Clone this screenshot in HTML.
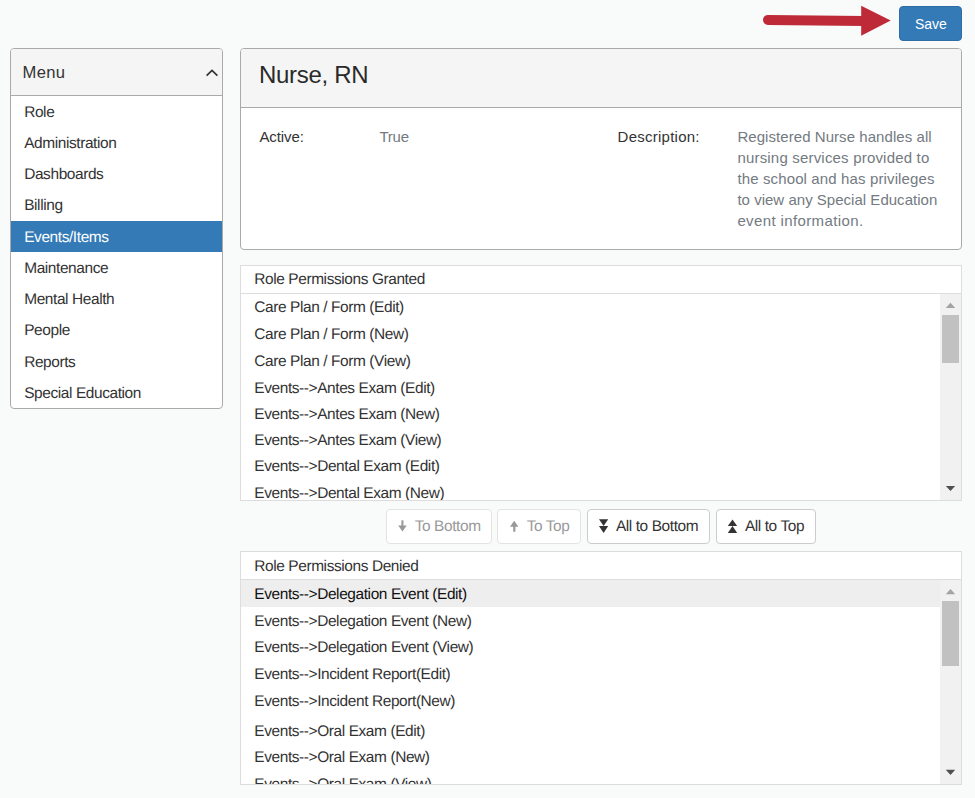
<!DOCTYPE html>
<html><head><meta charset="utf-8"><title>Role</title>
<style>
html,body{margin:0;padding:0}
body{width:975px;height:798px;overflow:hidden;position:relative;background:#f9fbfa;font-family:"Liberation Sans",sans-serif}
.t{position:absolute;white-space:nowrap;line-height:20px;font-family:"Liberation Sans",sans-serif}
</style></head><body>
<svg style="position:absolute;left:0;top:0" width="975" height="48" viewBox="0 0 975 48">
<line x1="768" y1="19.9" x2="864" y2="21" stroke="#be2a38" stroke-width="10" stroke-linecap="round"/>
<polygon points="861.2,5.8 890.7,20.5 861.2,35.7" fill="#be2a38"/>
</svg>
<div style="position:absolute;left:899px;top:6px;width:63px;height:35px;box-sizing:border-box;background:#337ab7;border:1px solid #2e6da4;border-radius:4px;"></div>
<div class="t " style="left:914.80px;top:13.80px;font-size:15.3px;color:#fff;letter-spacing:0px;transform:scaleX(0.915);transform-origin:0 0;">Save</div>
<div style="position:absolute;left:10px;top:48px;width:213px;height:361px;box-sizing:border-box;background:#fff;border:1px solid #aaaaaa;border-radius:4px;overflow:hidden;"><div style="height:46px;background:#f5f5f5;border-bottom:1px solid #aaaaaa"></div><div style="position:absolute;left:0;top:172px;width:211px;height:31px;background:#337ab7"></div></div>
<div class="t " style="left:22.60px;top:63.15px;font-size:16.6px;color:#333;letter-spacing:0.33px;">Menu</div>
<svg style="position:absolute;left:204px;top:67px" width="16" height="12" viewBox="0 0 16 12"><polyline points="2.6,8.6 8,3.4 13.4,8.6" fill="none" stroke="#333" stroke-width="1.7"/></svg>
<div class="t " style="left:24.20px;top:102.60px;font-size:15.45px;color:#333;letter-spacing:-0.4px;text-rendering:geometricPrecision;">Role</div>
<div class="t " style="left:24.20px;top:134.00px;font-size:15.45px;color:#333;letter-spacing:-0.4px;text-rendering:geometricPrecision;">Administration</div>
<div class="t " style="left:24.20px;top:165.20px;font-size:15.45px;color:#333;letter-spacing:-0.4px;text-rendering:geometricPrecision;">Dashboards</div>
<div class="t " style="left:24.20px;top:195.80px;font-size:15.45px;color:#333;letter-spacing:-0.4px;text-rendering:geometricPrecision;">Billing</div>
<div class="t " style="left:24.20px;top:227.80px;font-size:15.45px;color:#fff;letter-spacing:-0.4px;text-rendering:geometricPrecision;">Events/Items</div>
<div class="t " style="left:24.20px;top:258.80px;font-size:15.45px;color:#333;letter-spacing:-0.4px;text-rendering:geometricPrecision;">Maintenance</div>
<div class="t " style="left:24.20px;top:289.70px;font-size:15.45px;color:#333;letter-spacing:-0.4px;text-rendering:geometricPrecision;">Mental Health</div>
<div class="t " style="left:24.20px;top:320.60px;font-size:15.45px;color:#333;letter-spacing:-0.4px;text-rendering:geometricPrecision;">People</div>
<div class="t " style="left:24.20px;top:352.90px;font-size:15.45px;color:#333;letter-spacing:-0.4px;text-rendering:geometricPrecision;">Reports</div>
<div class="t " style="left:24.20px;top:383.80px;font-size:15.45px;color:#333;letter-spacing:-0.4px;text-rendering:geometricPrecision;">Special Education</div>
<div style="position:absolute;left:240px;top:48px;width:722px;height:202px;box-sizing:border-box;background:#fff;border:1px solid #aaaaaa;border-radius:4px;overflow:hidden;"><div style="height:58px;background:#f5f5f5;border-bottom:1px solid #aaaaaa"></div></div>
<div class="t " style="left:259.00px;top:64.88px;font-size:24px;color:#2a2a2a;letter-spacing:-0.3px;">Nurse, RN</div>
<div class="t " style="left:259.40px;top:126.60px;font-size:15px;color:#333;letter-spacing:-0.1px;">Active:</div>
<div class="t " style="left:379.40px;top:126.60px;font-size:15px;color:#737a81;letter-spacing:-0.2px;">True</div>
<div class="t " style="left:617.60px;top:126.60px;font-size:15px;color:#333;letter-spacing:0.25px;">Description:</div>
<div class="t " style="left:737.40px;top:126.60px;font-size:15px;color:#737a81;letter-spacing:0.06px;">Registered Nurse handles all</div>
<div class="t " style="left:737.40px;top:147.60px;font-size:15px;color:#737a81;letter-spacing:0.19px;">nursing services provided to</div>
<div class="t " style="left:737.40px;top:169.00px;font-size:15px;color:#737a81;letter-spacing:0.13px;">the school and has privileges</div>
<div class="t " style="left:737.40px;top:190.00px;font-size:15px;color:#737a81;letter-spacing:0.02px;">to view any Special Education</div>
<div class="t " style="left:737.40px;top:211.00px;font-size:15px;color:#737a81;letter-spacing:0.38px;">event information.</div>
<div style="position:absolute;left:240px;top:265px;width:722px;height:236px;box-sizing:border-box;background:#fff;border:1px solid #dddddd;"><div style="height:27px;border-bottom:1px solid #dddddd"></div></div>
<div class="t " style="left:254.30px;top:269.60px;font-size:15.45px;color:#333;letter-spacing:-0.4px;text-rendering:geometricPrecision;">Role Permissions Granted</div>
<div style="position:absolute;left:241px;top:294px;width:699px;height:206px;overflow:hidden">
<div class="t " style="left:13.30px;top:3.70px;font-size:15.45px;color:#333;letter-spacing:-0.4px;text-rendering:geometricPrecision;">Care Plan / Form (Edit)</div>
<div class="t " style="left:13.30px;top:30.80px;font-size:15.45px;color:#333;letter-spacing:-0.4px;text-rendering:geometricPrecision;">Care Plan / Form (New)</div>
<div class="t " style="left:13.30px;top:58.00px;font-size:15.45px;color:#333;letter-spacing:-0.4px;text-rendering:geometricPrecision;">Care Plan / Form (View)</div>
<div class="t " style="left:13.30px;top:85.00px;font-size:15.45px;color:#333;letter-spacing:-0.4px;text-rendering:geometricPrecision;">Events--&gt;Antes Exam (Edit)</div>
<div class="t " style="left:13.30px;top:110.70px;font-size:15.45px;color:#333;letter-spacing:-0.4px;text-rendering:geometricPrecision;">Events--&gt;Antes Exam (New)</div>
<div class="t " style="left:13.30px;top:137.30px;font-size:15.45px;color:#333;letter-spacing:-0.4px;text-rendering:geometricPrecision;">Events--&gt;Antes Exam (View)</div>
<div class="t " style="left:13.30px;top:162.60px;font-size:15.45px;color:#333;letter-spacing:-0.4px;text-rendering:geometricPrecision;">Events--&gt;Dental Exam (Edit)</div>
<div class="t " style="left:13.30px;top:189.80px;font-size:15.45px;color:#333;letter-spacing:-0.4px;text-rendering:geometricPrecision;">Events--&gt;Dental Exam (New)</div>
</div>
<div style="position:absolute;left:940px;top:294px;width:21px;height:206px;background:#f1f1f1"></div><div style="position:absolute;left:942px;top:315px;width:17px;height:48px;background:#c1c1c1"></div><svg style="position:absolute;left:940px;top:294px" width="21" height="206" viewBox="0 0 21 206"><polygon points="5.8,14.100000000000012 10.5,8.800000000000011 15.2,14.100000000000012" fill="#a3a3a3"/><polygon points="5.8,191.89999999999998 15.2,191.89999999999998 10.5,197.09999999999997" fill="#505050"/></svg>
<div style="position:absolute;left:386px;top:509px;width:106px;height:35px;box-sizing:border-box;background:#fff;border:1px solid #e3e3e3;border-radius:4px;"></div>
<div style="position:absolute;left:497px;top:509px;width:84px;height:35px;box-sizing:border-box;background:#fff;border:1px solid #e3e3e3;border-radius:4px;"></div>
<div style="position:absolute;left:587px;top:509px;width:123px;height:35px;box-sizing:border-box;background:#fff;border:1px solid #ccc;border-radius:4px;"></div>
<div style="position:absolute;left:716px;top:509px;width:100px;height:35px;box-sizing:border-box;background:#fff;border:1px solid #ccc;border-radius:4px;"></div>
<div class="t " style="left:414.70px;top:516.80px;font-size:15.45px;color:#999;letter-spacing:-0.4px;text-rendering:geometricPrecision;">To Bottom</div>
<div class="t " style="left:526.70px;top:516.80px;font-size:15.45px;color:#999;letter-spacing:-0.4px;text-rendering:geometricPrecision;">To Top</div>
<div class="t " style="left:615.90px;top:516.80px;font-size:15.45px;color:#333;letter-spacing:-0.4px;text-rendering:geometricPrecision;">All to Bottom</div>
<div class="t " style="left:744.90px;top:516.80px;font-size:15.45px;color:#333;letter-spacing:-0.4px;text-rendering:geometricPrecision;">All to Top</div>
<svg style="position:absolute;left:380px;top:505px" width="450" height="44" viewBox="380 505 450 44">
<g fill="#999">
<rect x="401.4" y="520.3" width="2" height="6"/><polygon points="398.2,525.4 406.7,525.4 402.45,531.4"/>
<rect x="513.2" y="526" width="2.2" height="5.7"/><polygon points="510,526.7 518.4,526.7 514.2,520.7"/>
</g>
<g fill="#333">
<polygon points="599,519.2 608.2,519.2 603.6,526"/><polygon points="599,526 608.2,526 603.6,533"/>
<polygon points="727.8,526 737.2,526 732.5,519.4"/><polygon points="727.8,532.9 737.2,532.9 732.5,526"/>
</g></svg>
<div style="position:absolute;left:240px;top:551px;width:722px;height:234px;box-sizing:border-box;background:#fff;border:1px solid #dddddd;"><div style="height:27px;border-bottom:1px solid #dddddd"></div></div>
<div class="t " style="left:254.30px;top:557.10px;font-size:15.45px;color:#333;letter-spacing:-0.4px;text-rendering:geometricPrecision;">Role Permissions Denied</div>
<div style="position:absolute;left:241px;top:580px;width:699px;height:204px;overflow:hidden">
<div style="position:absolute;left:0;top:0;width:699px;height:27px;background:#eeeeee"></div>
<div class="t " style="left:13.30px;top:5.10px;font-size:15.45px;color:#111;letter-spacing:-0.4px;text-rendering:geometricPrecision;">Events--&gt;Delegation Event (Edit)</div>
<div class="t " style="left:13.30px;top:31.70px;font-size:15.45px;color:#333;letter-spacing:-0.4px;text-rendering:geometricPrecision;">Events--&gt;Delegation Event (New)</div>
<div class="t " style="left:13.30px;top:57.90px;font-size:15.45px;color:#333;letter-spacing:-0.4px;text-rendering:geometricPrecision;">Events--&gt;Delegation Event (View)</div>
<div class="t " style="left:13.30px;top:84.60px;font-size:15.45px;color:#333;letter-spacing:-0.4px;text-rendering:geometricPrecision;">Events--&gt;Incident Report(Edit)</div>
<div class="t " style="left:13.30px;top:111.70px;font-size:15.45px;color:#333;letter-spacing:-0.4px;text-rendering:geometricPrecision;">Events--&gt;Incident Report(New)</div>
<div class="t " style="left:13.30px;top:142.10px;font-size:15.45px;color:#333;letter-spacing:-0.4px;text-rendering:geometricPrecision;">Events--&gt;Oral Exam (Edit)</div>
<div class="t " style="left:13.30px;top:167.60px;font-size:15.45px;color:#333;letter-spacing:-0.4px;text-rendering:geometricPrecision;">Events--&gt;Oral Exam (New)</div>
<div class="t " style="left:13.30px;top:195.10px;font-size:15.45px;color:#333;letter-spacing:-0.4px;text-rendering:geometricPrecision;">Events--&gt;Oral Exam (View)</div>
</div>
<div style="position:absolute;left:940px;top:580px;width:21px;height:204px;background:#f1f1f1"></div><div style="position:absolute;left:942px;top:601px;width:17px;height:65px;background:#c1c1c1"></div><svg style="position:absolute;left:940px;top:580px" width="21" height="204" viewBox="0 0 21 204"><polygon points="5.8,14.3 10.5,9.0 15.2,14.3" fill="#a3a3a3"/><polygon points="5.8,189.79999999999995 15.2,189.79999999999995 10.5,194.99999999999994" fill="#505050"/></svg>
</body></html>
